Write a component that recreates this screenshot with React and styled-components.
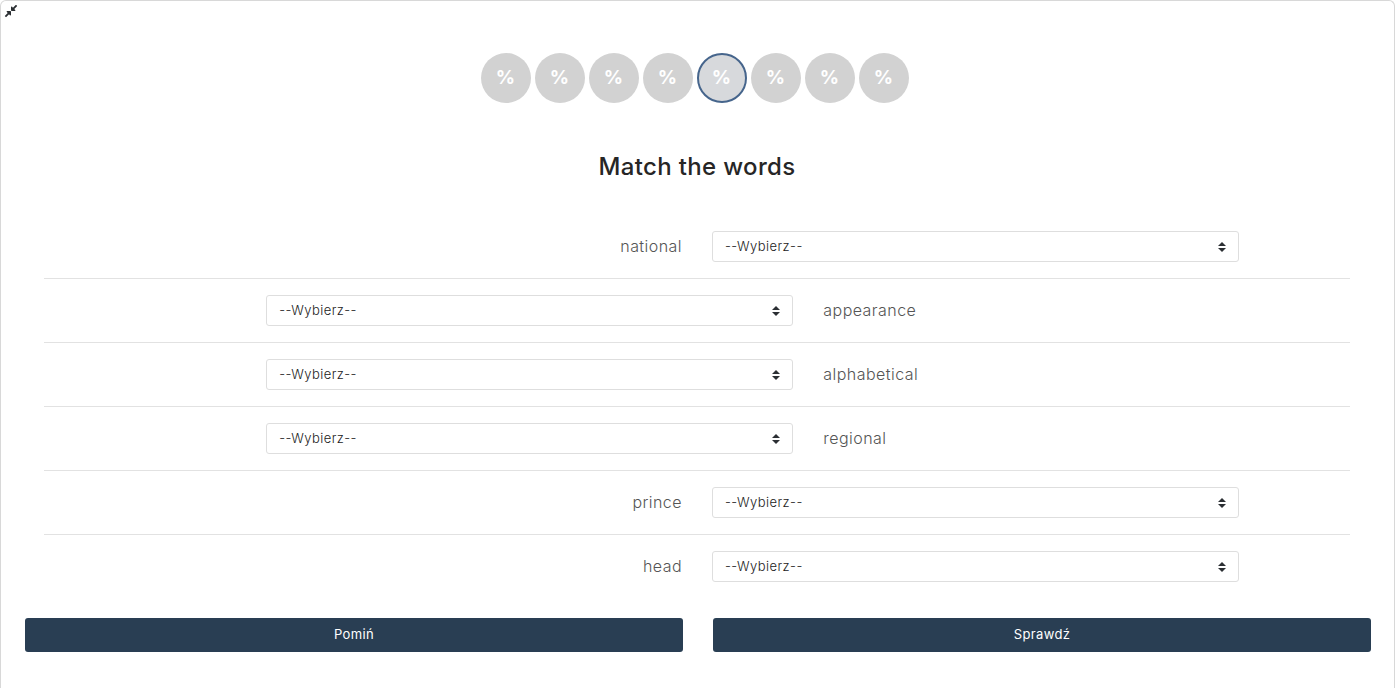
import React from 'react';
import styled, { createGlobalStyle } from 'styled-components';
import { FaCompressAlt } from 'react-icons/fa';

const GlobalStyle = createGlobalStyle`
  html, body {
    margin: 0;
    padding: 0;
    overflow: hidden;
    background: #fff;
    font-family: Inter, "Open Sans", sans-serif;
  }
  * {
    box-sizing: border-box;
  }
`;

const Card = styled.div`
  position: relative;
  height: 100vh;
  padding: 52px 23px 0 24px;
  background: #fff;
  border: 1px solid #d8d8d8;
  border-bottom: none;
  border-radius: 6px 6px 0 0;
`;

const CollapseButton = styled.button`
  position: absolute;
  top: 3px;
  left: 3px;
  display: flex;
  padding: 0;
  border: none;
  background: none;
  color: #2b2f33;
  font-size: 14px;
`;

const Steps = styled.div`
  display: flex;
  justify-content: center;
  gap: 4px;
  padding-right: 7px;
`;

const Step = styled.div`
  display: flex;
  align-items: center;
  justify-content: center;
  width: 50px;
  height: 50px;
  padding-bottom: 2px;
  border-radius: 50%;
  background: ${({ $active }) => ($active ? '#d7d9dc' : '#d2d2d2')};
  border: ${({ $active }) => ($active ? '2px solid #46658c' : 'none')};
  color: #fff;
  font-size: 19px;
  font-weight: 700;
`;

const Title = styled.h2`
  margin: 46px 0 30px;
  padding-right: 2px;
  height: 36px;
  color: #262626;
  font-size: 24px;
  font-weight: 500;
  line-height: 36px;
  letter-spacing: 0.35px;
  text-align: center;
`;

const Pairs = styled.div`
  margin: 0 21px 0 19px;
`;

const Pair = styled.div`
  display: grid;
  grid-template-columns: repeat(12, 1fr);
  align-items: center;
  margin: 0 -15px;
  padding: 16px 0;
  border-bottom: ${({ $last }) => ($last ? 'none' : '1px solid #e2e2e2')};
  clip-path: inset(0 15px);
  height: ${({ $last }) => ($last ? '63px' : '64px')};
`;

const Word = styled.label`
  grid-column: ${({ $flip }) => ($flip ? '8 / 13' : '1 / 7')};
  grid-row: 1;
  padding: 0 15px 2px;
  color: #555;
  font-size: 16px;
  font-weight: 300;
  letter-spacing: 0.45px;
  text-align: ${({ $flip }) => ($flip ? 'left' : 'right')};
`;

const SelectCell = styled.div`
  grid-column: ${({ $flip }) => ($flip ? '3 / 8' : '7 / 12')};
  grid-row: 1;
  padding: ${({ $flip }) => ($flip ? '0 15px 0 14.5px' : '0 15px')};
`;

const arrows = encodeURIComponent(
  '<svg xmlns="http://www.w3.org/2000/svg" width="8" height="10" viewBox="0 0 8 10"><path fill="#2b2f33" d="M4 0 8 4H0zM4 10 0 6H8z"/></svg>'
);

const Select = styled.select`
  display: block;
  width: 100%;
  height: 31px;
  padding: 0 24px 2px 12px;
  appearance: none;
  border: 1px solid #dedede;
  border-radius: 3px;
  background: #fff url("data:image/svg+xml,${arrows}") no-repeat right 12px center;
  color: #222;
  font-family: inherit;
  font-size: 13px;
  font-weight: 300;
  letter-spacing: 0.45px;
`;

const Actions = styled.div`
  display: grid;
  grid-template-columns: 1fr 1fr;
  gap: 30px;
  margin-top: 20px;
`;

const ActionButton = styled.button`
  height: 34px;
  padding-bottom: 3px;
  border: none;
  border-radius: 3px;
  background: #293e53;
  color: #fff;
  font-family: inherit;
  font-size: 13px;
  font-weight: 400;
  letter-spacing: 0.35px;
`;

const pairs = [
  { word: 'national' },
  { word: 'appearance', flip: true },
  { word: 'alphabetical', flip: true },
  { word: 'regional', flip: true },
  { word: 'prince' },
  { word: 'head' },
];

const App = () => {
  return (
    <>
      <GlobalStyle />
      <Card>
        <CollapseButton aria-label="Zwiń">
          <FaCompressAlt />
        </CollapseButton>
        <Steps>
          {[0, 1, 2, 3, 4, 5, 6, 7].map((n) => (
            <Step key={n} $active={n === 4}>%</Step>
          ))}
        </Steps>
        <Title>Match the words</Title>
        <Pairs>
          {pairs.map(({ word, flip }, i) => (
            <Pair key={word} $last={i === pairs.length - 1}>
              <Word $flip={flip}>{word}</Word>
              <SelectCell $flip={flip}>
                <Select defaultValue="">
                  <option value="">--Wybierz--</option>
                </Select>
              </SelectCell>
            </Pair>
          ))}
        </Pairs>
        <Actions>
          <ActionButton>Pomiń</ActionButton>
          <ActionButton>Sprawdź</ActionButton>
        </Actions>
      </Card>
    </>
  );
};

export default App;
